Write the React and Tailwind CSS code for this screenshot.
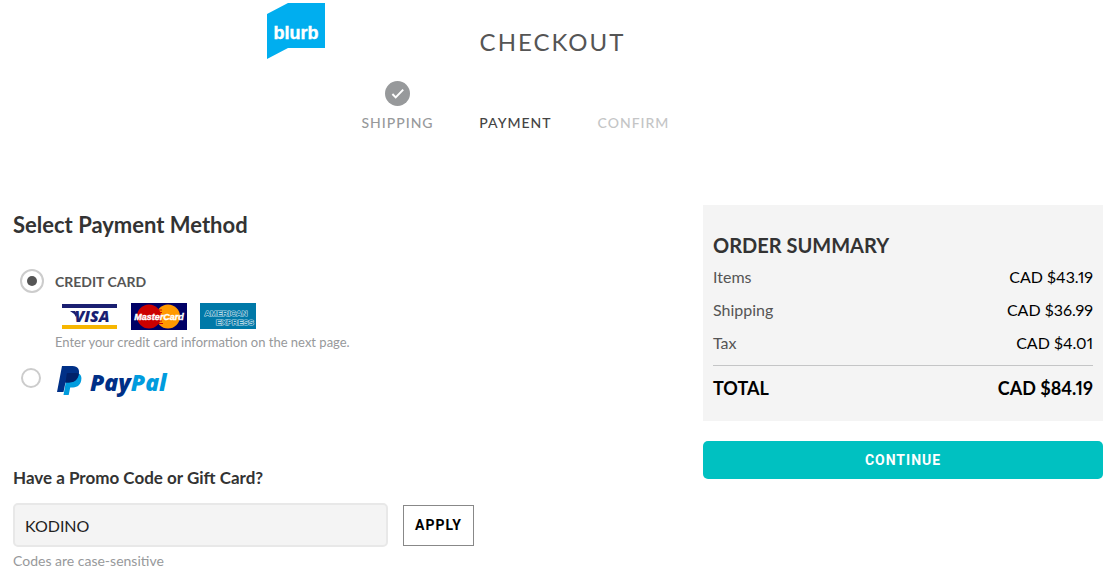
const steps = [
  { label: "Shipping", state: "done" },
  { label: "Payment", state: "current" },
  { label: "Confirm", state: "next" },
];

const stepColors = {
  done: "text-[#97999b]",
  current: "text-[#444444]",
  next: "text-[#c4c5c6]",
};

const orderLines = [
  { label: "Items", amount: "CAD $43.19" },
  { label: "Shipping", amount: "CAD $36.99" },
  { label: "Tax", amount: "CAD $4.01" },
];

function BlurbLogo() {
  return (
    <svg viewBox="0 0 58 56" className="h-14 w-[58px]" role="img" aria-label="blurb">
      <path d="M0 11 21 0h37v45H21L0 56Z" fill="#00aeef" />
      <text x="29" y="36" textAnchor="middle" fontFamily="Liberation Sans, sans-serif" fontSize="18" fontWeight="700" fill="#fff" stroke="#fff" strokeWidth="0.4">
        blurb
      </text>
    </svg>
  );
}

function CheckBadge() {
  return (
    <svg viewBox="0 0 25 25" className="h-[25px] w-[25px]" aria-hidden="true">
      <circle cx="12.5" cy="12.5" r="12.5" fill="#97999b" />
      <path d="m7.4 13 3.3 3.4 7.5-7.8" fill="none" stroke="#fff" strokeWidth="2" />
    </svg>
  );
}

function VisaCard() {
  return (
    <svg viewBox="0 0 57 27" className="h-[27px] w-[57px]" role="img" aria-label="Visa">
      <path d="M1 1h55v4H1z" fill="#1a1f71" />
      <path d="M1 22h55v4H1z" fill="#f7b600" />
      <path d="M9 8h5l2 3-1 3q-2-4-6-6Z" fill="#1a1f71" />
      <text x="31" y="19" textAnchor="middle" fontFamily="Open Sans, sans-serif" fontSize="16" fontWeight="800" fontStyle="italic" fill="#1a1f71">
        VISA
      </text>
    </svg>
  );
}

function MasterCard() {
  return (
    <svg viewBox="0 0 56 27" className="h-[27px] w-14" role="img" aria-label="MasterCard">
      <path d="M0 0h56v27H0z" fill="#000066" />
      <circle cx="37" cy="13.5" r="12" fill="#ff9900" />
      <circle cx="18" cy="13.5" r="12" fill="#cc0000" />
      <path d="M26 7h5M27 9.500h4M27 18h4M26 20.500h6" stroke="#cc0000" />
      <text x="28" y="17" textAnchor="middle" fontFamily="Liberation Sans, sans-serif" fontSize="9" fontWeight="700" fontStyle="italic" fill="#fff" stroke="#fff" strokeWidth="0.4">
        MasterCard
      </text>
    </svg>
  );
}

function AmexCard() {
  return (
    <svg viewBox="0 0 56 26" className="h-[26px] w-14" role="img" aria-label="American Express">
      <path d="M0 0h56v26H0z" fill="#0079a8" />
      <g fontFamily="Liberation Sans, sans-serif" fontSize="8" fontWeight="700" fill="#0079a8" stroke="#b5d8e6" strokeWidth="1.2" paintOrder="stroke">
        <text x="26" y="13" textAnchor="middle">AMERICAN</text>
        <text x="35" y="22" textAnchor="middle">EXPRESS</text>
      </g>
    </svg>
  );
}

function PayPalLogo() {
  return (
    <svg viewBox="0 0 114 31" className="h-[31px] w-[114px]" role="img" aria-label="PayPal">
      <path d="M21 7c3 1.500 4 4 3.200 7.400C23 20 19 21.500 14.500 21.500h-1.300L11.700 29H6.500L10 9Z" fill="#009cde" />
      <path d="M5 0h10.500C21 0 23 3.500 21.700 8.800 20.500 14.300 17 16.500 11.800 16.500H8.500L6.500 26H0Z" fill="#003087" />
      <path d="M9.800 7.600Q10 7 11 7h8q1.500 0 2.800.6c-1 6.200-4.300 8.900-10 8.900H8.500Z" fill="#012169" />
      <text x="33" y="25" fontFamily="Open Sans, sans-serif" fontSize="23" fontWeight="800" fontStyle="italic" fill="#003087">
        Pay<tspan fill="#009cde">Pal</tspan>
      </text>
    </svg>
  );
}

function Header() {
  return (
    <header className="mx-auto max-w-[580px] pt-[3px]">
      <div className="relative flex h-[78px] items-center justify-center pr-2">
        <a href="#home" className="absolute left-0 top-0">
          <BlurbLogo />
        </a>
        <h1 className="text-2xl tracking-[2px] text-[#555555]">CHECKOUT</h1>
      </div>
      <ol className="ml-18 grid w-[354px] grid-cols-3">
        {steps.map(({ label, state }) => (
          <li key={label} className={`flex flex-col items-center ${stepColors[state]}`}>
            <div className="h-8">{state === "done" && <CheckBadge />}</div>
            <span className="text-sm font-medium uppercase tracking-[1px]">{label}</span>
          </li>
        ))}
      </ol>
    </header>
  );
}

function PaymentMethods() {
  return (
    <fieldset>
      <legend className="text-[22px] leading-8 font-bold text-[#333333]">Select Payment Method</legend>
      <div className="mt-7 flex items-start pl-[7px]">
        <input
          id="credit-card"
          type="radio"
          name="payment"
          defaultChecked
          className="h-6 w-6 appearance-none rounded-full border-2 border-[#cccccc] p-[5px] checked:bg-[#555555] checked:bg-clip-content"
        />
        <div className="pl-[11px]">
          <label htmlFor="credit-card" className="block pt-px text-sm leading-6 font-bold text-[#555555]">
            CREDIT CARD
          </label>
          <div className="mt-[9px] flex gap-[13px] pl-[6px]">
            <VisaCard />
            <MasterCard />
            <AmexCard />
          </div>
          <p className="mt-[2px] text-[13px] leading-5 text-[#97999b]">
            Enter your credit card information on the next page.
          </p>
        </div>
      </div>
      <div className="mt-[14px] flex items-start pl-2">
        <input
          id="paypal"
          type="radio"
          name="payment"
          className="mt-[2px] h-5 w-5 appearance-none rounded-full border-2 border-[#cccccc] p-1 checked:bg-[#555555] checked:bg-clip-content"
        />
        <label htmlFor="paypal" className="pl-4">
          <PayPalLogo />
        </label>
      </div>
    </fieldset>
  );
}

function PromoCode() {
  return (
    <form className="mt-[69px]">
      <label htmlFor="promo" className="block text-[17px] leading-6 font-bold text-[#333333]">
        Have a Promo Code or Gift Card?
      </label>
      <div className="mt-[13px] flex items-center gap-[15px]">
        <input
          id="promo"
          type="text"
          defaultValue="KODINO"
          className="h-11 w-[375px] rounded-[5px] border-2 border-[#e8e8e8] bg-[#f4f4f4] px-[10px] text-base text-[#222222]"
        />
        <button type="button" className="h-[41px] w-[71px] border border-[#888888] bg-white font-['Roboto',sans-serif] text-sm font-bold tracking-[1px] text-black">
          APPLY
        </button>
      </div>
      <p className="mt-1 text-sm text-[#97999b]">Codes are case-sensitive</p>
    </form>
  );
}

function OrderSummary() {
  return (
    <aside className="w-[400px] shrink-0">
      <section className="bg-[#f4f4f4] px-[10px] pt-6 pb-[11px]">
        <h2 className="text-xl leading-8 font-bold text-[#333333]">ORDER SUMMARY</h2>
        <table className="w-full text-base leading-8 proportional-nums">
          <tbody>
            {orderLines.map(({ label, amount }) => (
              <tr key={label} className="h-[33px] align-top last:h-[38px]">
                <th scope="row" className="text-left font-normal text-[#555555]">{label}</th>
                <td className="text-right text-black">{amount}</td>
              </tr>
            ))}
          </tbody>
          <tfoot>
            <tr className="h-[45px] border-t border-[#c4c5c6] text-lg font-bold text-black">
              <th scope="row" className="text-left">TOTAL</th>
              <td className="text-right">CAD $84.19</td>
            </tr>
          </tfoot>
        </table>
      </section>
      <button type="button" className="mt-5 h-[38px] w-full rounded-[5px] bg-[#00c1c1] font-['Roboto',sans-serif] text-sm font-bold tracking-[1px] text-white">
        CONTINUE
      </button>
    </aside>
  );
}

export default function App() {
  return (
    <div className="bg-white font-['Lato',sans-serif]">
      <Header />
      <main className="mt-[72px] flex items-start justify-between pr-[10px] pl-[13px]">
        <div className="pt-1">
          <PaymentMethods />
          <PromoCode />
        </div>
        <OrderSummary />
      </main>
    </div>
  );
}
